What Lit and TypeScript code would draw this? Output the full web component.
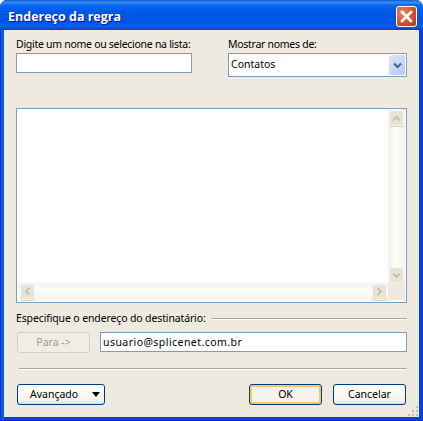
import { LitElement, html, css } from "lit";
import { customElement } from "lit/decorators.js";

const chevron = (rot: number, color: string) => html`<svg width="9" height="7" viewBox="0 0 9 7" style="transform:rotate(${rot}deg)"><path d="M1 1.5 4.5 5 8 1.5" fill="none" stroke="${color}" stroke-width="2"/></svg>`;

@customElement("app-root")
export class AppRoot extends LitElement {
  static styles = css`
    :host { display: block; width: 423px; height: 421px; font-family: "Noto Sans", sans-serif; font-size: 10.5px; color: #000; }
    * { box-sizing: border-box; }
    .win { width: 423px; height: 421px; display: flex; flex-direction: column; background: linear-gradient(90deg, #0831d9 0, #0831d9 1px, #0a5ae6 1px, #0a5ae6 4px, #0a3fdc 4px); border-radius: 7px 7px 0 0; overflow: hidden; border-bottom: 1px solid #0831d9; }
    .title { height: 30px; flex: none; display: flex; align-items: center; justify-content: space-between; padding: 2px 6px 0 8px;
      background: linear-gradient(180deg, #0a5bd8 0%, #3f8cf3 8%, #0a6af0 16%, #0058e6 40%, #0054e3 70%, #0a5fe8 88%, #0443c8 100%); }
    .title span { color: #fff; font-family: "Open Sans", sans-serif; font-weight: 700; font-size: 12.5px; text-shadow: 1px 1px 0 #0f1089; }
    .close { width: 21px; height: 21px; border: 1px solid #fff; border-radius: 3px; background: radial-gradient(circle at 30% 30%, #e8876a, #d5502c 55%, #b83a17); display: flex; align-items: center; justify-content: center; }
    .frame { flex: 1; margin: 0 4px 3px; background: #eeeadf; padding: 8px 12px 0 12px; display: flex; flex-direction: column; position: relative; }
    .top { display: grid; grid-template-columns: 176px 179px; column-gap: 36px; }
    .top label { display: block; height: 15px; line-height: 13px; white-space: nowrap; letter-spacing: -0.28px; }
    .input { background: #fff; border: 1px solid #7f9db9; display: flex; align-items: center; padding-left: 2px; white-space: nowrap; }
    .name { height: 20px; }
    .select { height: 24px; justify-content: space-between; padding: 0 1px 0 2px; }
    .select span { padding-bottom: 2px; }
    .drop { width: 16px; height: 20px; border-radius: 2px; background: linear-gradient(135deg, #dfe7fb, #b5c6f5); display: flex; align-items: center; justify-content: center; }
    .list { margin-top: 31px; height: 195px; border: 1px solid #7f9db9; background: #fff; padding: 1px 1px 2px; display: grid; grid-template-columns: 1fr 17px; grid-template-rows: 1fr 17px; }
    .canvas { background: #fff; }
    .vbar { padding-right: 1px; background: linear-gradient(90deg, #f3f1ec, #fdfdfa 40%, #f5f3ec); display: flex; flex-direction: column; justify-content: space-between; align-items: center; }
    .hbar { background: linear-gradient(180deg, #f3f1ec, #fdfdfa 40%, #f5f3ec); display: flex; justify-content: space-between; align-items: center; padding: 0 1px 0 2px; }
    .sb { width: 15px; height: 16px; background: #e7e4d8; border: 1px solid #f6f4ee; border-radius: 2px; display: flex; align-items: center; justify-content: center; box-shadow: 0 1px 0 #d5d2c3; }
    .corner { background: #eeeadf; }
    .group { margin-top: 8px; height: 14px; display: flex; align-items: center; gap: 5px; white-space: nowrap; letter-spacing: -0.13px; }
    .group i, .sep { display: block; height: 1px; background: #aca899; box-shadow: 0 1px 0 #fff; }
    .group i { flex: 1; }
    .to { margin-top: 7px; display: flex; gap: 10px; padding-left: 1px; }
    .btn { height: 21px; border: 1px solid #003c74; border-radius: 3px; padding-bottom: 1px; background: linear-gradient(180deg, #fff, #f4f2ea 85%, #dcd8ca); display: flex; align-items: center; justify-content: center; }
    .dis { width: 73px; border-color: #d5d1c2; background: #f0eee3; color: #a19d8d; }
    .mail { flex: 1; height: 20px; letter-spacing: 0.45px; }
    .sep { margin: 15px 0 0 3px; }
    .foot { margin-top: 15px; display: flex; padding-left: 1px; padding-right: 1px; }
    .adv { width: 88px; justify-content: space-between; padding: 0 3px 1px 12px; }
    .arrow { width: 0; height: 0; border: 4.5px solid transparent; border-top: 5px solid #000; border-bottom: 0; margin-right: 1px; }
    .w73 { width: 73px; }
    .ok { margin-left: auto; margin-right: 11px; border-color: #003c74; box-shadow: inset 0 0 0 2px #f6c868; background: #f4f2ec; }
    .grip { position: absolute; right: 0; bottom: 0; }
  `;
  render() {
    return html`<div class="win">
      <div class="title"><span>Endereço da regra</span>
        <div class="close"><svg width="13" height="13" viewBox="0 0 13 13"><path d="M2 2l9 9M11 2l-9 9" stroke="#fff" stroke-width="2.6" stroke-linecap="square"/></svg></div>
      </div>
      <div class="frame">
        <div class="top">
          <div><label>Digite um nome ou selecione na lista:</label><div class="input name"></div></div>
          <div><label>Mostrar nomes de:</label><div class="input select"><span>Contatos</span><div class="drop">${chevron(0, "#4d6185")}</div></div></div>
        </div>
        <div class="list">
          <div class="canvas"></div>
          <div class="vbar"><div class="sb">${chevron(180, "#c4c2b5")}</div><div class="sb">${chevron(0, "#c4c2b5")}</div></div>
          <div class="hbar"><div class="sb">${chevron(90, "#c4c2b5")}</div><div class="sb">${chevron(-90, "#c4c2b5")}</div></div>
          <div class="corner"></div>
        </div>
        <div class="group">Especifique o endereço do destinatário:<i></i></div>
        <div class="to"><div class="btn dis">Para -&gt;</div><div class="input mail">usuario@splicenet.com.br</div></div>
        <div class="sep"></div>
        <div class="foot">
          <div class="btn adv">Avançado<div class="arrow"></div></div>
          <div class="btn w73 ok">OK</div>
          <div class="btn w73">Cancelar</div>
        </div>
        <svg class="grip" width="12" height="12" viewBox="0 0 12 12" fill="#c3bfae"><rect x="9" y="1" width="2" height="2"/><rect x="5" y="5" width="2" height="2"/><rect x="9" y="5" width="2" height="2"/><rect x="1" y="9" width="2" height="2"/><rect x="5" y="9" width="2" height="2"/><rect x="9" y="9" width="2" height="2"/></svg>
      </div>
    </div>`;
  }
}
